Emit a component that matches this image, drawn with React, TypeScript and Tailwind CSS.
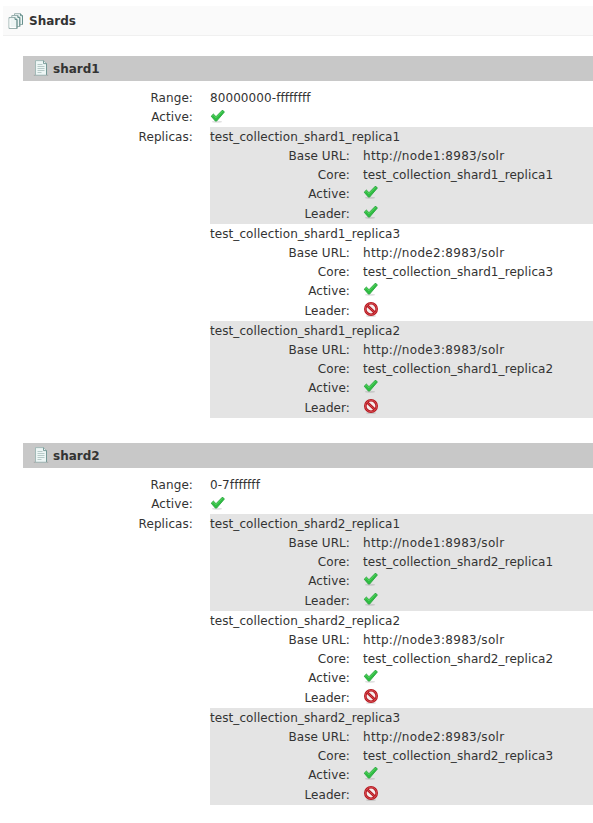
type Replica = { name: string; node: string; leader: boolean };
type Shard = { name: string; range: string; replicas: Replica[] };

const shards: Shard[] = [
  {
    name: 'shard1',
    range: '80000000-ffffffff',
    replicas: [
      { name: 'test_collection_shard1_replica1', node: 'http://node1:8983/solr', leader: true },
      { name: 'test_collection_shard1_replica3', node: 'http://node2:8983/solr', leader: false },
      { name: 'test_collection_shard1_replica2', node: 'http://node3:8983/solr', leader: false },
    ],
  },
  {
    name: 'shard2',
    range: '0-7fffffff',
    replicas: [
      { name: 'test_collection_shard2_replica1', node: 'http://node1:8983/solr', leader: true },
      { name: 'test_collection_shard2_replica2', node: 'http://node3:8983/solr', leader: false },
      { name: 'test_collection_shard2_replica3', node: 'http://node2:8983/solr', leader: false },
    ],
  },
];

function Tick() {
  return (
    <svg className="block" width="16" height="16" viewBox="0 0 16 16">
      <ellipse cx="7" cy="13.7" rx="5" ry="1" fill="#000" opacity=".12" />
      <path d="M1.2 8.2 3.4 6.1 6 8.7 12.5 2.1 14.4 4 6.6 13.1 5.4 13.1Z" fill="#2fbd42" stroke="#26a43c" strokeWidth=".9" strokeLinejoin="round" />
      <path d="M2.3 8.1 3.4 7.1 6 9.7 12.5 3.2" fill="none" stroke="#63dc6a" strokeWidth=".8" />
    </svg>
  );
}

function Prohibited() {
  return (
    <svg className="block" width="16" height="16" viewBox="0 0 16 16">
      <ellipse cx="8" cy="14.9" rx="5" ry="1" fill="#000" opacity=".13" />
      <circle cx="8" cy="8" r="5.7" fill="#f6eeee" stroke="#b5171e" strokeWidth="2.6" />
      <path d="m4.3 4.5 7.4 7" stroke="#b5171e" strokeWidth="2.6" />
      <circle cx="8" cy="8" r="5.7" fill="none" stroke="#d9535a" strokeWidth=".8" />
      <path d="m4.3 4.5 7.4 7" stroke="#d9535a" strokeWidth=".8" />
    </svg>
  );
}

function Documents() {
  return (
    <svg className="block" width="16" height="16" viewBox="0 0 16 16">
      <g fill="#edf5f4" stroke="#9ab1af" strokeWidth="1">
        <path d="M6.5.7h6l2 2v8.8h-8z" />
        <path d="M3.8 2.5h6l2 2v9h-8z" />
        <path d="M1 4.5h6l2 2v9H1z" />
      </g>
      <path d="M7 4.5v2h2v9M9.8 2.5v2h2v9M12.5.7v2h2v8.8" fill="none" stroke="#66908d" strokeWidth="1" />
      <path d="M2 5.7v8.8h6" fill="none" stroke="#fff" />
    </svg>
  );
}

function Document() {
  return (
    <svg className="mb-[2px] block" width="16" height="16" viewBox="0 0 16 16">
      <path d="M.8 15.3h14.4" stroke="#888" strokeWidth="1" opacity=".5" />
      <path d="M2.5.6h8l3 3v11.6h-11z" fill="#edf6f5" stroke="#9db5b3" strokeWidth=".9" />
      <path d="M10.5.6v3h3v11.3" fill="none" stroke="#6f9492" strokeWidth=".9" />
      <path d="M4.5 4.5h5M4.5 6.5h7M4.5 8.5h7M4.5 10.5h7M4.5 12.5h4" stroke="#b0c5c3" strokeWidth=".9" />
    </svg>
  );
}

function ReplicaCard({ replica, shaded }: { replica: Replica; shaded: boolean }) {
  return (
    <div className={shaded ? 'h-[97px] bg-[#e4e4e4]' : 'h-[97px]'}>
      <div className="h-[19px]">{replica.name}</div>
      <dl className="grid grid-cols-[140px_1fr] grid-rows-[19px_19px_20px_20px] gap-x-[13px]">
        <dt className="text-right">Base URL:</dt>
        <dd className="tracking-[0.3px]">{replica.node}</dd>
        <dt className="text-right">Core:</dt>
        <dd>{replica.name}</dd>
        <dt className="text-right">Active:</dt>
        <dd><Tick /></dd>
        <dt className="text-right">Leader:</dt>
        <dd>{replica.leader ? <Tick /> : <Prohibited />}</dd>
      </dl>
    </div>
  );
}

export default function App() {
  return (
    <main className="h-[823px] overflow-hidden bg-white pt-[6px] font-['DejaVu_Sans',sans-serif] text-[12px] leading-[21px] tracking-[0.08px] text-[#333]">
      <h1 className="ml-[3px] flex h-[30px] items-center gap-[5px] border-b border-[#f0f0f0] bg-[#fafafa] pl-[5px] font-bold tracking-normal">
        <Documents />
        <span className="pt-px">Shards</span>
      </h1>
      <div className="ml-[23px] mt-5 flex flex-col gap-[25px]">
        {shards.map((shard) => (
          <section key={shard.name} className="h-[362px]">
            <h2 className="flex h-[25px] items-center gap-1 bg-[#c8c8c8] pl-[10px] font-bold tracking-normal">
              <Document />
              <span className="pt-px">{shard.name}</span>
            </h2>
            <dl className="mt-[7px] grid grid-cols-[170px_1fr] grid-rows-[19px_20px_auto] gap-x-[17px]">
              <dt className="text-right">Range:</dt>
              <dd>{shard.range}</dd>
              <dt className="text-right">Active:</dt>
              <dd className="pt-px"><Tick /></dd>
              <dt className="text-right">Replicas:</dt>
              <dd>
                {shard.replicas.map((replica, index) => (
                  <ReplicaCard key={replica.name} replica={replica} shaded={index % 2 === 0} />
                ))}
              </dd>
            </dl>
          </section>
        ))}
      </div>
    </main>
  );
}
